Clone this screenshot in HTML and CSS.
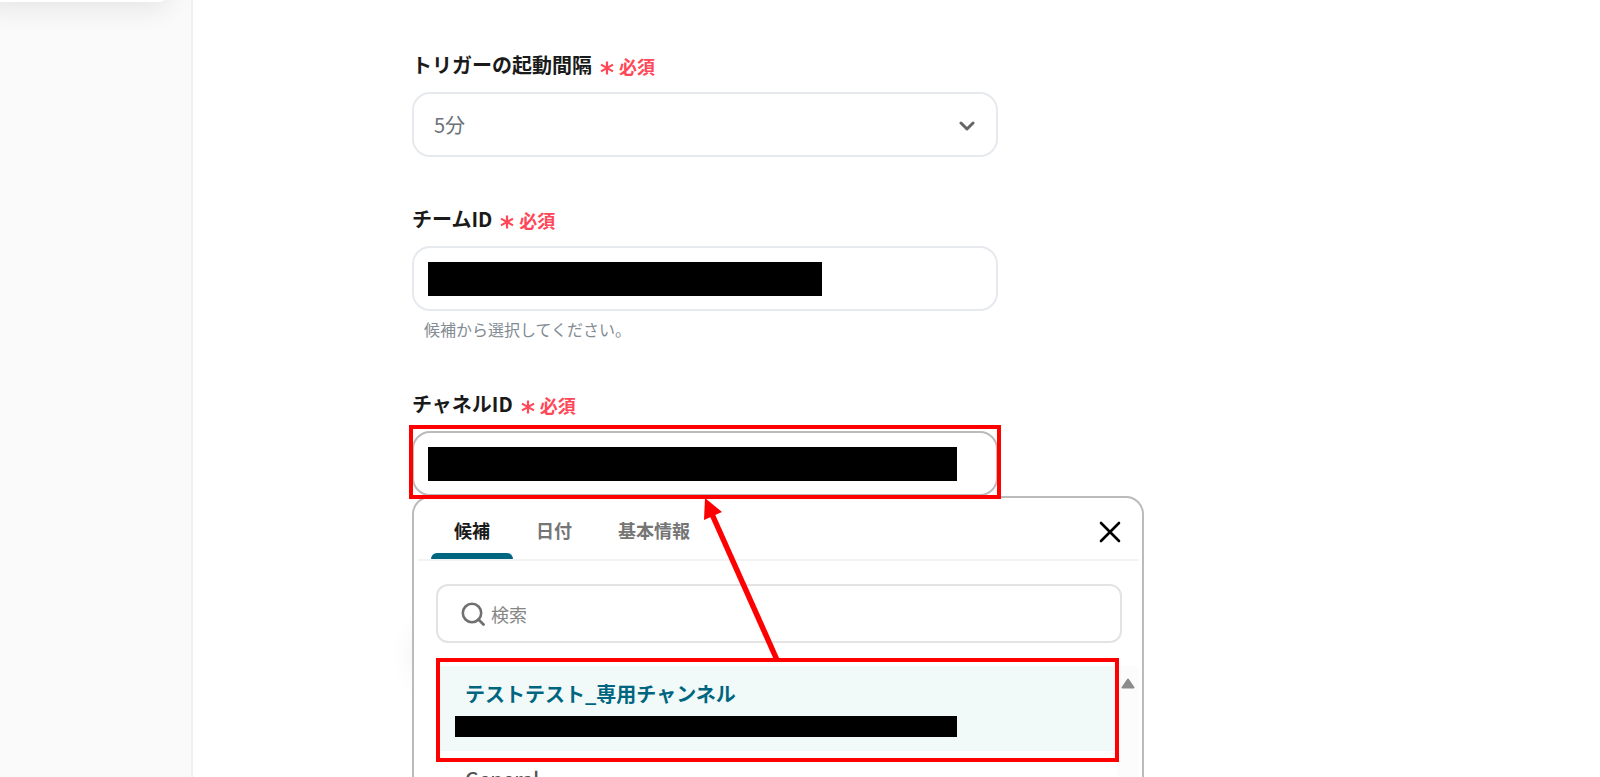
FILE: index.html
```
<!DOCTYPE html>
<html lang="ja">
<head>
    <meta charset="UTF-8">
    <meta name="viewport" content="width=device-width, initial-scale=1.0">
    <title>トリガーの設定</title>
    <link rel="stylesheet" href="styles.css">
</head>
<body>
    <svg width="0" height="0" class="defs">
        <symbol id="asterisk" viewBox="0 0 14 14">
            <path d="M7 0.5v13M1 3.6l12 6.8M1 10.4l12-6.8" fill="none" stroke="currentColor" stroke-width="2.2" />
        </symbol>
    </svg>
    <aside class="sidebar">
        <div class="sidebar-card"></div>
    </aside>
    <main class="content">
        <form class="form">
            <div class="field">
                <label class="field-label" for="interval">トリガーの起動間隔<span class="required"><svg><use href="#asterisk" /></svg>必須</span></label>
                <div class="box">
                    <select id="interval">
                        <option>5分</option>
                    </select>
                    <svg class="chevron" viewBox="0 0 16 10">
                        <path d="M2 2l6 6 6-6" fill="none" stroke="#666" stroke-width="3" stroke-linecap="round" stroke-linejoin="round" />
                    </svg>
                </div>
            </div>

            <div class="field">
                <label class="field-label" for="team">チームID<span class="required"><svg><use href="#asterisk" /></svg>必須</span></label>
                <div class="box">
                    <input class="masked masked-team" id="team" type="text">
                </div>
                <p class="help">候補から選択してください。</p>
            </div>

            <div class="field">
                <label class="field-label" for="channel">チャネルID<span class="required"><svg><use href="#asterisk" /></svg>必須</span></label>
                <div class="box box-focus">
                    <input class="masked masked-channel" id="channel" type="text">
                    <div class="mark mark-field"></div>
                </div>

                <div class="panel-wrap">
                    <div class="panel">
                        <div class="panel-header">
                            <button type="button" class="tab active">候補</button>
                            <button type="button" class="tab">日付</button>
                            <button type="button" class="tab">基本情報</button>
                            <button type="button" class="close" aria-label="閉じる">
                                <svg viewBox="0 0 22 22">
                                    <path d="M2 2l18 18M20 2L2 20" stroke="#000" stroke-width="2.6" stroke-linecap="round" />
                                </svg>
                            </button>
                        </div>
                        <div class="search">
                            <svg viewBox="0 0 24 24">
                                <circle cx="11" cy="11" r="9.2" fill="none" stroke="#707070" stroke-width="2.6" />
                                <path d="M17.5 17.5l5 5" stroke="#707070" stroke-width="2.8" stroke-linecap="round" />
                            </svg>
                            <input type="text" placeholder="検索" aria-label="検索">
                        </div>
                        <div class="list">
                            <div class="options">
                                <div class="option selected">
                                    <div class="option-name">テストテスト_専用チャンネル</div>
                                    <div class="option-id"></div>
                                    <div class="mark mark-option"></div>
                                </div>
                                <div class="option">
                                    <div class="option-name">General</div>
                                    <div class="option-id"></div>
                                </div>
                            </div>
                            <div class="scrollbar">
                                <svg viewBox="0 0 14 11">
                                    <path d="M7 1.5L12.5 9.5h-11z" fill="#8b8b8b" stroke="#8b8b8b" stroke-width="2" stroke-linejoin="round" />
                                </svg>
                            </div>
                        </div>
                        <!-- arrow from the option to the field -->
                        <svg class="arrow" viewBox="0 0 80 166">
                            <path d="M11 14L77 162" stroke="#f00" stroke-width="5.5" />
                            <path d="M5 0L4 22L22 14z" fill="#f00" />
                        </svg>
                    </div>
                </div>
            </div>
        </form>
    </main>
</body>
</html>
```

FILE: styles.css
```
* {
    box-sizing: border-box;
}

body {
    display: flex;
    height: 100vh;
    margin: 0;
    overflow: hidden;
    background-color: #fff;
    color: #1a1a1a;
    font-family: "Noto Sans CJK JP", "Noto Sans", sans-serif;
}

button, input, select {
    font-family: inherit;
}

.defs {
    position: absolute;
}

.sidebar {
    flex: 0 0 193px;
    overflow: hidden;
    background-color: #fafafa;
    border-right: 2px solid #f0f0f0;
}

.sidebar-card {
    height: 60px;
    margin: -58px 22px 0 -20px;
    border-radius: 10px;
    background-color: #fff;
    box-shadow: 0 6px 28px rgba(0, 0, 0, 0.09);
}

.content {
    flex: 1;
    padding: 49px 40px 0 219px;
}

.form {
    display: flex;
    flex-direction: column;
    gap: 46px;
    max-width: 732px;
}

.field-label {
    display: flex;
    align-items: center;
    height: 30px;
    margin-bottom: 13px;
    font-size: 20px;
    font-weight: 700;
}

.required {
    display: flex;
    align-items: center;
    gap: 5px;
    padding: 4px 0 0 8px;
    color: #ff4757;
    font-size: 18px;
}

.required svg {
    width: 14px;
    height: 14px;
    margin-top: 4px;
}

.box {
    position: relative;
    display: flex;
    align-items: center;
    max-width: 586px;
    height: 65px;
    padding: 0 14px;
    border: 2px solid #e6eaee;
    border-radius: 18px;
    background-color: #fff;
}

.box-focus {
    border-color: #bbb;
}

.box select {
    width: 100%;
    padding: 0 6px;
    border: none;
    background: none;
    color: #6b7278;
    font-size: 20px;
    appearance: none;
}

.chevron {
    position: absolute;
    top: 27px;
    right: 21px;
    width: 16px;
    height: 10px;
    pointer-events: none;
}

.masked {
    height: 34px;
    padding: 0;
    border: none;
    background-color: #000;
}

.masked-team {
    width: 394px;
}

.masked-channel {
    width: 529px;
}

.help {
    margin: 5px 0 0;
    padding-left: 12px;
    color: #838b93;
    font-size: 16px;
    line-height: 26px;
}

.mark {
    position: absolute;
    z-index: 2;
    border: 4px solid #f00;
    pointer-events: none;
}

.mark-field {
    inset: -8px -5px -5px;
}

.mark-option {
    inset: -8px -2px -11px -4px;
}

.panel-wrap {
    position: relative;
}

/* floating button hidden behind the panel */
.panel-wrap::before {
    content: "";
    position: absolute;
    top: 134px;
    left: 4px;
    width: 50px;
    height: 50px;
    border-radius: 50%;
    box-shadow: 0 0 30px rgba(0, 0, 0, 0.1);
}

.panel {
    position: relative;
    border: 2px solid #bbb;
    border-radius: 18px;
    background-color: #fff;
}

.panel-header {
    display: flex;
    align-items: center;
    height: 63px;
    margin: 0 3px 0 4px;
    padding: 0 18px 0 13px;
    border-bottom: 2px solid #f3f3f3;
}

.tab {
    align-self: stretch;
    position: relative;
    padding: 2px 23px 0;
    border: none;
    background: none;
    color: #757575;
    font-size: 18px;
    font-weight: 700;
    cursor: pointer;
}

.tab.active {
    color: #1a1a1a;
}

.tab.active::after {
    content: "";
    position: absolute;
    right: 0;
    bottom: 0;
    left: 0;
    height: 6px;
    border-radius: 6px 6px 0 0;
    background-color: #006680;
}

.close {
    margin-left: auto;
    padding: 6px 0 0;
    border: none;
    background: none;
    cursor: pointer;
}

.close svg {
    display: block;
    width: 22px;
    height: 22px;
}

.search {
    display: flex;
    align-items: center;
    gap: 6px;
    height: 59px;
    margin: 23px 20px 0 22px;
    padding: 0 22px 0 23px;
    border: 2px solid #e3e3e3;
    border-radius: 12px;
}

.search svg {
    width: 24px;
    height: 24px;
}

.search input {
    flex: 1;
    padding: 0;
    border: none;
    outline: none;
    font-size: 18px;
}

.search input::placeholder {
    color: #858585;
}

.list {
    display: flex;
    margin: 23px 3px 0 26px;
}

.options {
    flex: 1;
}

.option {
    position: relative;
    height: 85px;
    padding: 13px 15px 0;
}

.option-name {
    padding-left: 10px;
    color: #555;
    font-size: 20px;
    font-weight: 500;
    line-height: 30px;
}

.option-id {
    max-width: 502px;
    height: 21px;
    margin-top: 7px;
    background-color: #000;
}

.option.selected {
    background-color: #f1faf9;
}

.option.selected .option-name {
    color: #006680;
    font-weight: 700;
}

.scrollbar {
    width: 22px;
    padding: 12px 4px 0;
    background-color: #fcfcfc;
}

.scrollbar svg {
    display: block;
    width: 14px;
    height: 11px;
}

.arrow {
    position: absolute;
    top: 0;
    left: 286px;
    z-index: 3;
    width: 80px;
    height: 166px;
    pointer-events: none;
}
```
